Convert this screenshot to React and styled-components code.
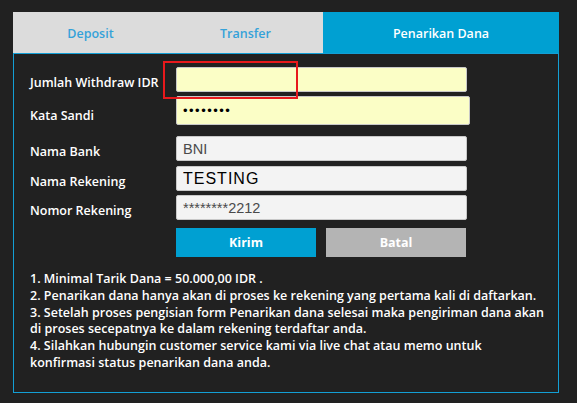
import React from "react";
import styled, { createGlobalStyle } from "styled-components";

const GlobalStyle = createGlobalStyle`
  html, body {
    margin: 0;
    padding: 0;
    background: #212121;
  }
  body {
    font-family: "Open Sans", "Liberation Sans", sans-serif;
  }
`;

const Page = styled.div`
  width: 577px;
  height: 403px;
  padding: 12px 18px 0 13px;
  box-sizing: border-box;
  background: #212121;
  position: relative;
  overflow: hidden;
`;

const Tabs = styled.div`
  display: flex;
  height: 41px;
`;

const Tab = styled.div`
  flex: ${(p) => (p.$grow ? "1" : "0 0 155px")};
  display: flex;
  align-items: center;
  justify-content: center;
  background: ${(p) => (p.$active ? "#00a0d2" : "#dcdcdc")};
  color: ${(p) => (p.$active ? "#fff" : "#35a2d9")};
  font-size: 12.5px;
  font-weight: 600;
  padding-top: 1px;
`;

const Panel = styled.div`
  border: 1px solid #139fd5;
  height: 340px;
  box-sizing: border-box;
  padding: 13px 8px 0 16px;
`;

const Row = styled.div`
  display: flex;
  align-items: center;
  margin-top: ${(p) => p.$mt || 0}px;
`;

const Label = styled.div`
  width: 146px;
  flex: 0 0 146px;
  color: #fff;
  font-size: 12.5px;
  font-weight: 600;
  padding-top: ${(p) => p.$pt || 5}px;
`;

const Field = styled.input`
  width: ${(p) => p.$w || 291}px;
  height: ${(p) => p.$h || 25}px;
  box-sizing: border-box;
  border: 1px solid #c8c8c8;
  border-radius: 2px;
  background: ${(p) => (p.$yellow ? "#fbfec6" : "#f3f3f3")};
  font-family: "Liberation Sans", Arial, sans-serif;
  font-size: ${(p) => p.$fs || 14.5}px;
  letter-spacing: ${(p) => p.$ls || 0}px;
  color: ${(p) => p.$color || "#4a4a4a"};
  padding: 0 6px;
  margin: 0;
  outline: none;
`;

const Buttons = styled.div`
  display: flex;
  gap: 10px;
  margin: 8px 0 0 146px;
`;

const Button = styled.button`
  width: 140px;
  height: 29px;
  border: none;
  margin: 0;
  padding: 0;
  background: ${(p) => (p.$cancel ? "#b4b4b4" : "#00a0d2")};
  color: #fff;
  font-family: "Open Sans", "Liberation Sans", sans-serif;
  font-size: 12.5px;
  font-weight: 700;
`;

const Notes = styled.div`
  margin-top: 14px;
  color: #fff;
  font-size: 12.5px;
  font-weight: 600;
  line-height: 16.8px;
  white-space: nowrap;
`;

const Marker = styled.div`
  position: absolute;
  left: 163px;
  top: 61px;
  width: 135px;
  height: 38px;
  box-sizing: border-box;
  border: 2px solid #e8191c;
  pointer-events: none;
`;

const notes = [
  ["1. Minimal Tarik Dana = 50.000,00 IDR ."],
  ["2. Penarikan dana hanya akan di proses ke rekening yang pertama kali di daftarkan."],
  [
    "3. Setelah proses pengisian form Penarikan dana selesai maka pengiriman dana akan",
    "di proses secepatnya ke dalam rekening terdaftar anda.",
  ],
  [
    "4. Silahkan hubungin customer service kami via live chat atau memo untuk",
    "konfirmasi status penarikan dana anda.",
  ],
];

export default function App() {
  return (
    <Page>
      <GlobalStyle />
      <Tabs>
        <Tab>Deposit</Tab>
        <Tab>Transfer</Tab>
        <Tab $active $grow>
          Penarikan Dana
        </Tab>
      </Tabs>
      <Panel>
        <Row>
          <Label>Jumlah Withdraw IDR</Label>
          <Field $yellow readOnly value="" />
        </Row>
        <Row $mt={4}>
          <Label $pt={9}>Kata Sandi</Label>
          <Field
            $yellow
            $w={294}
            $h={29}
            $color="#000"
            $fs={13}
            $ls={1.5}
            type="password"
            readOnly
            value="12345678"
          />
        </Row>
        <Row $mt={11}>
          <Label>Nama Bank</Label>
          <Field readOnly value="BNI" />
        </Row>
        <Row $mt={5}>
          <Label>Nama Rekening</Label>
          <Field readOnly value="TESTING" $color="#000" $fs={16} $ls={1} />
        </Row>
        <Row $mt={4}>
          <Label>Nomor Rekening</Label>
          <Field readOnly value="********2212" />
        </Row>
        <Buttons>
          <Button>Kirim</Button>
          <Button $cancel>Batal</Button>
        </Buttons>
        <Notes>
          {notes.map((lines) => (
            <div key={lines[0]}>
              {lines.map((l, i) => (
                <React.Fragment key={l}>
                  {i > 0 && <br />}
                  {l}
                </React.Fragment>
              ))}
            </div>
          ))}
        </Notes>
      </Panel>
      <Marker />
    </Page>
  );
}
